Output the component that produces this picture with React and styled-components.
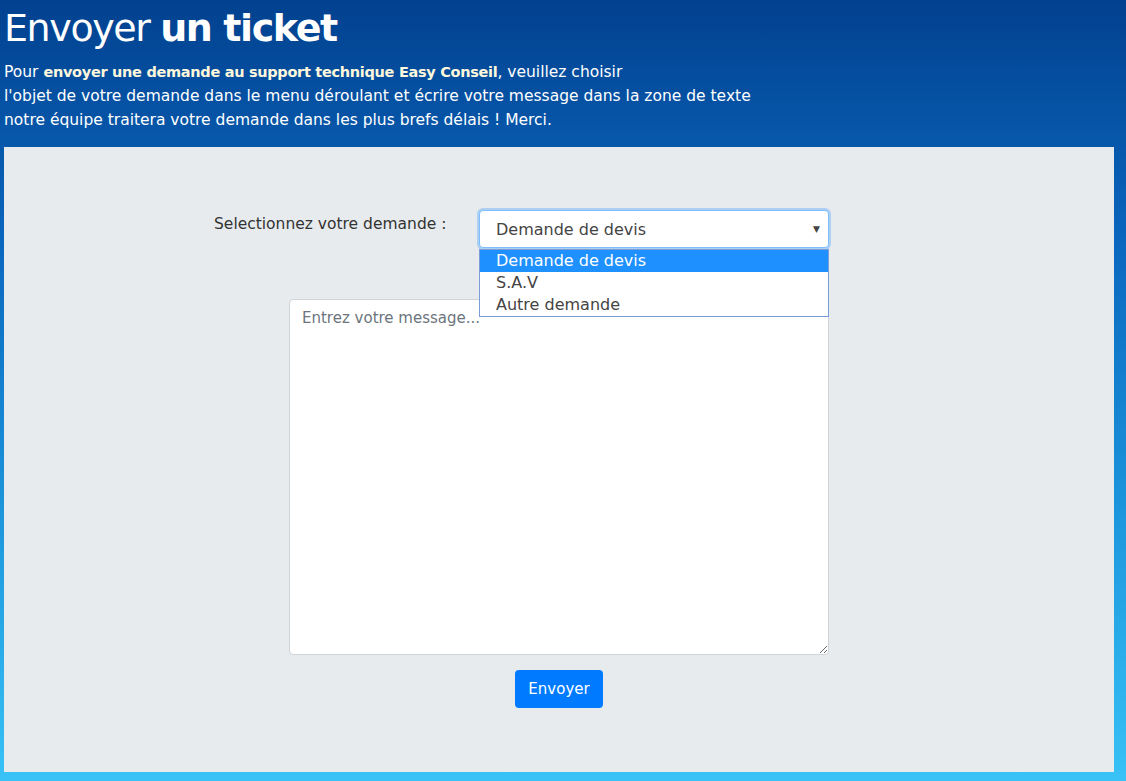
import React, { useState } from "react";
import styled, { createGlobalStyle } from "styled-components";

const GlobalStyle = createGlobalStyle`
  html, body {
    margin: 0;
    padding: 0;
  }
  body {
    font-family: "DejaVu Sans", "Liberation Sans", sans-serif;
    background: linear-gradient(180deg, #02418f 0%, #0a66bd 30%, #1c95dc 65%, #38c2f6 100%);
    min-height: 781px;
  }
`;

const Page = styled.div`
  width: 1126px;
  height: 781px;
  box-sizing: border-box;
  padding: 0 12px 9px 4px;
  display: flex;
  flex-direction: column;
`;

const Header = styled.header`
  color: #fff;
  padding-bottom: 15px;
`;

const Title = styled.h1`
  margin: 0;
  padding-top: 5px;
  font-size: 38px;
  font-weight: 400;
  line-height: 47px;
  letter-spacing: -1.4px;
  b {
    font-weight: 700;
  }
`;

const Intro = styled.p`
  margin: 8px 0 0;
  font-size: 15.5px;
  line-height: 24px;
  b {
    color: #fff8dc;
    font-size: 14.5px;
    letter-spacing: -0.3px;
  }
`;

const Panel = styled.main`
  flex: 1;
  background: #e7ebee;
  padding-top: 63px;
  display: flex;
  justify-content: center;
`;

const Form = styled.form`
  width: 540px;
  display: flex;
  flex-direction: column;
  align-items: center;
`;

const SelectRow = styled.div`
  display: grid;
  grid-template-columns: 265px 350px;
  align-self: flex-end;
  margin-bottom: 51px;
`;

const Label = styled.label`
  font-size: 15.5px;
  color: #333;
  padding-top: 5px;
`;

const SelectWrap = styled.div`
  position: relative;
`;

const SelectBox = styled.div`
  height: 38px;
  box-sizing: border-box;
  border: 1px solid #80bdff;
  border-radius: 4px;
  background: #fff;
  box-shadow: 0 0 0 2px rgba(0, 123, 255, 0.25);
  display: flex;
  align-items: center;
  justify-content: space-between;
  padding: 0 8px 0 16px;
  font-size: 16px;
  color: #444;
  cursor: pointer;
`;

const Caret = styled.span`
  font-size: 9px;
  color: #444;
`;

const Options = styled.ul`
  position: absolute;
  top: 39px;
  left: 0;
  right: 0;
  margin: 0;
  padding: 0;
  list-style: none;
  background: #fff;
  border: 1px solid #7a9cd8;
  z-index: 2;
`;

const Option = styled.li`
  height: 22px;
  line-height: 22px;
  padding-left: 16px;
  font-size: 16px;
  color: ${(p) => (p.$active ? "#fff" : "#444")};
  background: ${(p) => (p.$active ? "#1e90ff" : "transparent")};
`;

const Message = styled.textarea`
  width: 540px;
  height: 356px;
  box-sizing: border-box;
  border: 1px solid #ced4da;
  border-radius: 4px;
  padding: 9px 12px;
  font-family: inherit;
  font-size: 15px;
  color: #444;
  background: #fff;
  resize: both;
  &::placeholder {
    color: #6c757d;
  }
`;

const Button = styled.button`
  margin-top: 15px;
  height: 38px;
  padding: 0 13px;
  border: none;
  border-radius: 4px;
  background: #007bff;
  color: #fff;
  font-family: inherit;
  font-size: 15px;
  cursor: pointer;
`;

const choices = ["Demande de devis", "S.A.V", "Autre demande"];

const App = () => {
  const [value] = useState(choices[0]);

  return (
    <>
      <GlobalStyle />
      <Page>
        <Header>
          <Title>
            Envoyer <b>un ticket</b>
          </Title>
          <Intro>
            Pour <b>envoyer une demande au support technique Easy Conseil</b>, veuillez choisir
            <br />
            l'objet de votre demande dans le menu déroulant et écrire votre message dans la zone de texte
            <br />
            notre équipe traitera votre demande dans les plus brefs délais ! Merci.
          </Intro>
        </Header>
        <Panel>
          <Form onSubmit={(e) => e.preventDefault()}>
            <SelectRow>
              <Label>Selectionnez votre demande :</Label>
              <SelectWrap>
                <SelectBox>
                  {value}
                  <Caret>▼</Caret>
                </SelectBox>
                <Options>
                  {choices.map((c) => (
                    <Option key={c} $active={c === value}>
                      {c}
                    </Option>
                  ))}
                </Options>
              </SelectWrap>
            </SelectRow>
            <Message placeholder="Entrez votre message..." />
            <Button type="submit">Envoyer</Button>
          </Form>
        </Panel>
      </Page>
    </>
  );
};

export default App;
